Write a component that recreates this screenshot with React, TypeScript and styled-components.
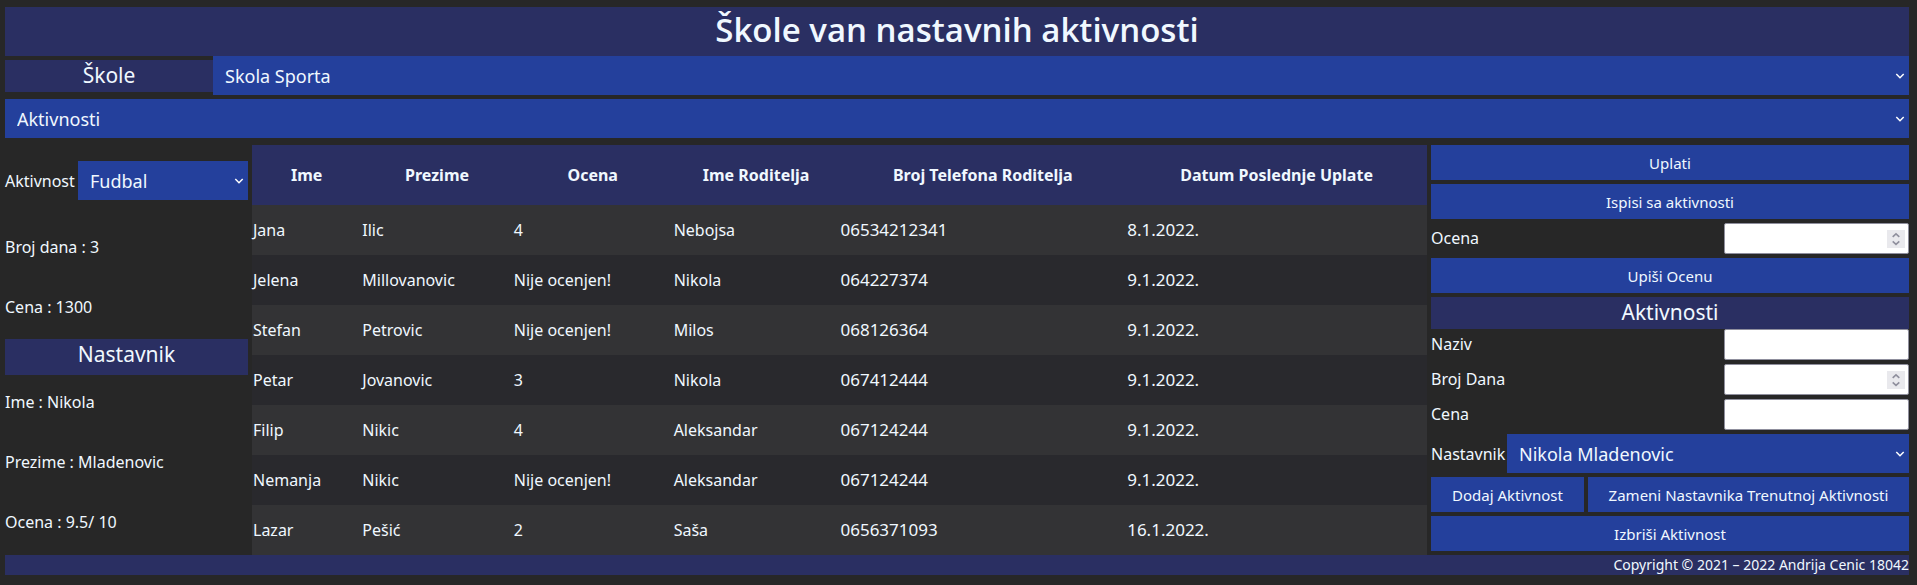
import React from 'react';
import styled, { createGlobalStyle, css } from 'styled-components';

const colors = {
  page: '#272727',
  panel: '#2a2f62',
  action: '#24409c',
  text: '#f0f8ff',
  rowOdd: '#333335',
  rowEven: '#29292d',
};

const sans = `'Noto Sans', 'Open Sans', sans-serif`;

const GlobalStyle = createGlobalStyle`
  *, *::before, *::after { box-sizing: border-box; }
  body {
    margin: 0;
    background: ${colors.page};
    color: ${colors.text};
    font: 16px/20px ${sans};
  }
  button, input, select { font-family: inherit; color: inherit; }
`;

const Page = styled.div`
  padding: 7px 8px 10px 5px;
`;

const Title = styled.h1`
  margin: 0;
  padding-bottom: 4px;
  background: ${colors.panel};
  font: 600 33px/45px 'Open Sans', 'Noto Sans', sans-serif;
  text-align: center;
`;

const SectionTitle = styled.h2<{ $tall?: boolean }>`
  margin: 0;
  padding-bottom: ${(p) => (p.$tall ? 6 : 2)}px;
  background: ${colors.panel};
  font-size: 21px;
  font-weight: 400;
  line-height: 30px;
  text-align: center;
`;

const SchoolRow = styled.div`
  display: flex;
  align-items: center;
  margin-bottom: 4px;
`;

const SchoolLabel = styled.label`
  flex: 0 0 208px;
  padding-bottom: 2px;
  background: ${colors.panel};
  font-size: 21px;
  line-height: 30px;
  text-align: center;
`;

const SelectBox = styled.div`
  position: relative;
  flex: 1;
  min-width: 0;

  svg {
    position: absolute;
    right: 4px;
    top: 50%;
    margin-top: -4px;
    pointer-events: none;
  }
`;

const SelectField = styled.select`
  display: block;
  width: 100%;
  height: 39px;
  padding: 0 20px 0 12px;
  border: 0;
  border-radius: 0;
  appearance: none;
  background: ${colors.action};
  font-size: 18px;
`;

const Main = styled.main`
  display: grid;
  grid-template-columns: minmax(0, 243fr) minmax(0, 1175fr) minmax(0, 478fr);
  column-gap: 4px;
  margin-top: 7px;
`;

const FieldRow = styled.div<{ $spaced?: boolean }>`
  display: flex;
  align-items: center;
  ${(p) => p.$spaced && css`margin-top: 16px;`}
`;

const SelectLabel = styled.label<{ $wide?: boolean }>`
  flex: 0 0 ${(p) => (p.$wide ? 76 : 73)}px;
`;

const Facts = styled.div<{ $teacher?: boolean }>`
  display: flex;
  flex-direction: column;
  gap: 40px;
  padding: ${(p) => (p.$teacher ? '17px 0' : '37px 0 22px')};

  p { margin: 0; }
`;

const Table = styled.table`
  width: 100%;
  table-layout: fixed;
  border-collapse: collapse;

  th { height: 60px; padding: 0; background: ${colors.panel}; }
  td { height: 50px; padding: 0 1px; }
  tbody tr { background: ${colors.rowEven}; }
  tbody tr:nth-child(odd) { background: ${colors.rowOdd}; }
`;

const Col = styled.col<{ $share: number }>`
  width: ${(p) => p.$share}%;
`;

const NumberCell = styled.td`
  font-size: 17px;
`;

const Side = styled.section`
  display: flex;
  flex-direction: column;
  gap: 4px;
`;

const FormBlock = styled.div`
  display: flex;
  flex-direction: column;
`;

const Button = styled.button<{ $grow?: number }>`
  ${(p) => p.$grow && css`flex: ${p.$grow} 1 0;`}
  height: 35px;
  padding: 0;
  border: 0;
  background: ${colors.action};
  font-size: 15px;
  line-height: 20px;
  white-space: nowrap;
  cursor: pointer;
`;

const ButtonRow = styled.div`
  display: flex;
  gap: 4px;
`;

const InputRow = styled.div`
  display: flex;
  justify-content: space-between;

  label { padding-top: 5px; }
`;

const InputBox = styled.div`
  position: relative;
  width: 185px;

  svg {
    position: absolute;
    right: 4px;
    top: 7px;
    pointer-events: none;
  }
`;

const Input = styled.input`
  display: block;
  width: 100%;
  height: 31px;
  padding: 0 24px 0 4px;
  border: 1px solid #8f8f9d;
  border-radius: 2px;
  background: #fff;
  color: #000;
  font-size: 16px;
  appearance: textfield;

  &::-webkit-inner-spin-button { appearance: none; }
`;

const Footer = styled.footer`
  background: ${colors.panel};
  font-size: 14px;
  line-height: 20px;
  text-align: right;
`;

function Select({ id, options, label }: { id: string; options: string[]; label?: string }) {
  return (
    <SelectBox>
      <SelectField id={id} aria-label={label}>
        {options.map((o) => (
          <option key={o}>{o}</option>
        ))}
      </SelectField>
      <svg width="10" height="8" viewBox="0 0 10 8" fill="none" stroke="#fff" strokeWidth="1.5" aria-hidden="true">
        <path d="M1.3 2 L5 5.7 L8.7 2" />
      </svg>
    </SelectBox>
  );
}

function Field({ id, label, numeric }: { id: string; label: string; numeric?: boolean }) {
  return (
    <InputRow>
      <label htmlFor={id}>{label}</label>
      <InputBox>
        <Input id={id} type={numeric ? 'number' : 'text'} />
        {numeric && (
          <svg width="18" height="18" viewBox="0 0 18 18" fill="none" stroke="#8f8f9d" strokeWidth="1.6" aria-hidden="true">
            <rect width="18" height="18" fill="#e9e9ed" stroke="none" />
            <path d="M5.7 6.8 L9 3.8 L12.3 6.8 M5.7 11.4 L9 14.4 L12.3 11.4" />
          </svg>
        )}
      </InputBox>
    </InputRow>
  );
}

const columns: [string, number][] = [
  ['Ime', 9.3],
  ['Prezime', 12.9],
  ['Ocena', 13.6],
  ['Ime Roditelja', 14.2],
  ['Broj Telefona Roditelja', 24.4],
  ['Datum Poslednje Uplate', 25.6],
];

const students = [
  ['Jana', 'Ilic', '4', 'Nebojsa', '06534212341', '8.1.2022.'],
  ['Jelena', 'Millovanovic', 'Nije ocenjen!', 'Nikola', '064227374', '9.1.2022.'],
  ['Stefan', 'Petrovic', 'Nije ocenjen!', 'Milos', '068126364', '9.1.2022.'],
  ['Petar', 'Jovanovic', '3', 'Nikola', '067412444', '9.1.2022.'],
  ['Filip', 'Nikic', '4', 'Aleksandar', '067124244', '9.1.2022.'],
  ['Nemanja', 'Nikic', 'Nije ocenjen!', 'Aleksandar', '067124244', '9.1.2022.'],
  ['Lazar', 'Pešić', '2', 'Saša', '0656371093', '16.1.2022.'],
];

export default function App() {
  return (
    <>
      <GlobalStyle />
      <Page>
        <Title>Škole van nastavnih aktivnosti</Title>
        <SchoolRow>
          <SchoolLabel htmlFor="skola">Škole</SchoolLabel>
          <Select id="skola" options={['Skola Sporta']} />
        </SchoolRow>
        <Select id="prikaz" label="Prikaz" options={['Aktivnosti']} />

        <Main>
          <section>
            <FieldRow $spaced>
              <SelectLabel htmlFor="aktivnost">Aktivnost</SelectLabel>
              <Select id="aktivnost" options={['Fudbal']} />
            </FieldRow>
            <Facts>
              <p>Broj dana : 3</p>
              <p>Cena : 1300</p>
            </Facts>
            <SectionTitle $tall>Nastavnik</SectionTitle>
            <Facts $teacher>
              <p>Ime : Nikola</p>
              <p>Prezime : Mladenovic</p>
              <p>Ocena : 9.5/ 10</p>
            </Facts>
          </section>

          <div>
            <Table>
              <colgroup>
                {columns.map(([name, share]) => (
                  <Col key={name} $share={share} />
                ))}
              </colgroup>
              <thead>
                <tr>
                  {columns.map(([name]) => (
                    <th key={name} scope="col">{name}</th>
                  ))}
                </tr>
              </thead>
              <tbody>
                {students.map((cells) => (
                  <tr key={cells[0]}>
                    {cells.map((cell, i) =>
                      i > 3 ? <NumberCell key={i}>{cell}</NumberCell> : <td key={i}>{cell}</td>
                    )}
                  </tr>
                ))}
              </tbody>
            </Table>
          </div>

          <Side>
            <Button type="button">Uplati</Button>
            <Button type="button">Ispisi sa aktivnosti</Button>
            <Field id="ocena" label="Ocena" numeric />
            <Button type="button">Upiši Ocenu</Button>
            <FormBlock>
              <SectionTitle>Aktivnosti</SectionTitle>
              <Field id="naziv" label="Naziv" />
            </FormBlock>
            <Field id="broj-dana" label="Broj Dana" numeric />
            <Field id="cena" label="Cena" />
            <FieldRow>
              <SelectLabel htmlFor="nastavnik" $wide>Nastavnik</SelectLabel>
              <Select id="nastavnik" options={['Nikola Mladenovic']} />
            </FieldRow>
            <ButtonRow>
              <Button type="button" $grow={153}>Dodaj Aktivnost</Button>
              <Button type="button" $grow={321}>Zameni Nastavnika Trenutnoj Aktivnosti</Button>
            </ButtonRow>
            <Button type="button">Izbriši Aktivnost</Button>
          </Side>
        </Main>
        <Footer>Copyright © 2021 – 2022 Andrija Cenic 18042</Footer>
      </Page>
    </>
  );
}
